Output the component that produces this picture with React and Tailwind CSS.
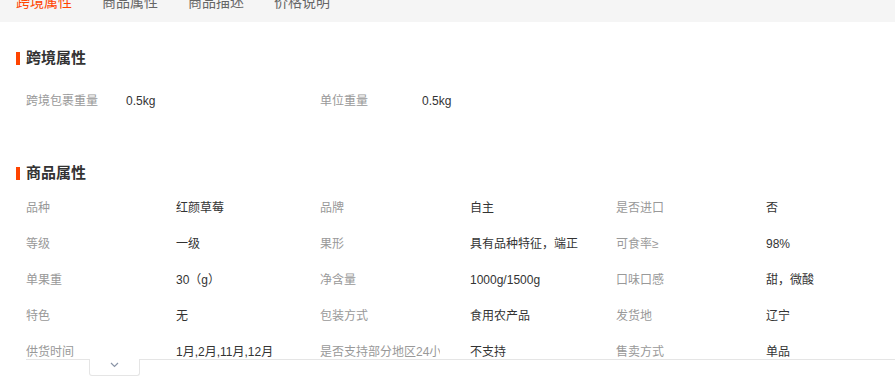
import React from 'react'

const font = { fontFamily: '"Liberation Sans", "Noto Sans CJK SC", sans-serif' }

const tabs = ['跨境属性', '商品属性', '商品描述', '价格说明']

const props = [
  ['品种', '红颜草莓', '品牌', '自主', '是否进口', '否'],
  ['等级', '一级', '果形', '具有品种特征，端正', '可食率≥', '98%'],
  ['单果重', '30（g）', '净含量', '1000g/1500g', '口味口感', '甜，微酸'],
  ['特色', '无', '包装方式', '食用农产品', '发货地', '辽宁'],
  ['供货时间', '1月,2月,11月,12月', '是否支持部分地区24小时发货', '不支持', '售卖方式', '单品'],
]

function Title ({ children }) {
  return (
    <div className="flex h-[24px] items-center">
      <span className="ml-[16px] h-[13px] w-[4px] bg-[#ff4400]" />
      <h3 className="ml-[6px] text-[15px] font-bold text-[#333]">{children}</h3>
    </div>
  )
}

function Cell ({ label, value, labelW, w = 'w-[294px]' }) {
  return (
    <div className={`flex ${w} shrink-0 items-center`}>
      <span className={`${labelW} shrink-0 overflow-hidden whitespace-nowrap text-[12px] text-[#999]`}>{label}</span>
      <span className="whitespace-nowrap text-[12px] text-[#333]">{value}</span>
    </div>
  )
}

export default function App () {
  return (
    <div className="h-[376px] w-[895px] overflow-hidden bg-white" style={font}>
      <div className="-mt-[18px] flex h-[40px] items-center gap-[30px] bg-[#f5f5f5] pl-[16px]">
        {tabs.map((t, i) => (
          <span key={t} className={`text-[14px] leading-[40px] ${i === 0 ? 'text-[#ff4400]' : 'text-[#666]'}`}>{t}</span>
        ))}
      </div>

      <div className="mt-[24px]">
        <Title>跨境属性</Title>
        <div className="mt-[13px] flex h-[36px] pl-[26px]">
          <Cell label="跨境包裹重量" value="0.5kg" labelW="w-[100px]" />
          <Cell label="单位重量" value="0.5kg" labelW="w-[102px]" />
        </div>
      </div>

      <div className="relative mt-[42px]">
        <Title>商品属性</Title>
        <div className="mt-[5px] h-[169px] overflow-hidden pl-[26px]">
          {props.map((r, i) => (
            <div key={i} className="flex h-[36px]">
              <Cell label={r[0]} value={r[1]} labelW="w-[150px]" />
              <Cell label={r[2]} value={r[3]} labelW="w-[120px] mr-[30px]" w="w-[296px]" />
              <Cell label={r[4]} value={r[5]} labelW="w-[150px]" w="w-[250px]" />
            </div>
          ))}
        </div>
        <div className="ml-[26px] flex">
          <div className="w-[63px] border-t border-[#e5e5e5]" />
          <div className="flex h-[17px] w-[51px] justify-center rounded-b-[3px] border-x border-b border-[#e5e5e5] pt-[3px]">
            <svg width="9" height="6" viewBox="0 0 9 6" fill="none">
              <polyline points="1,1 4.5,4.5 8,1" stroke="#8a94a6" strokeWidth="1.2" />
            </svg>
          </div>
          <div className="flex-1 border-t border-[#e5e5e5]" />
        </div>
      </div>
    </div>
  )
}
